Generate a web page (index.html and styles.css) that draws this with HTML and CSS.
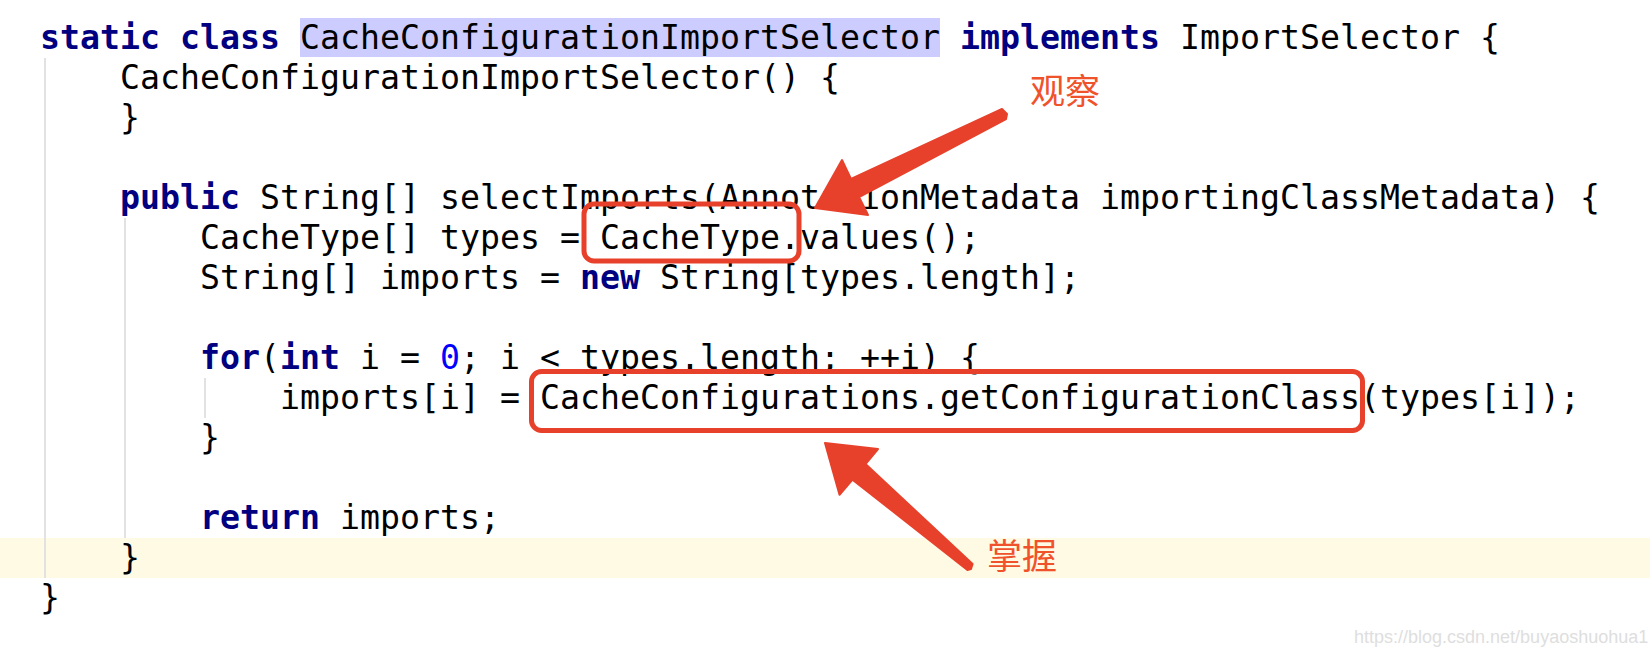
FILE: index.html
```html
<!DOCTYPE html>
<html lang="zh">
<head>
<meta charset="utf-8">
<title>CacheConfigurationImportSelector</title>
<link rel="stylesheet" href="styles.css">
</head>
<body>
<div class="editor">
  <div class="code">
    <div class="line"><span class="kw">static</span> <span class="kw">class</span> <span class="sel">CacheConfigurationImportSelector</span> <span class="kw">implements</span> ImportSelector {</div>
    <div class="line">    CacheConfigurationImportSelector() {</div>
    <div class="line">    }</div>
    <div class="line"> </div>
    <div class="line">    <span class="kw">public</span> String[] selectImports(AnnotationMetadata importingClassMetadata) {</div>
    <div class="line">        CacheType[] types = CacheType.values();</div>
    <div class="line">        String[] imports = <span class="kw">new</span> String[types.length];</div>
    <div class="line"> </div>
    <div class="line">        <span class="kw">for</span>(<span class="kw">int</span> i = <span class="num">0</span>; i &lt; types.length; ++i) {</div>
    <div class="line">            imports[i] = CacheConfigurations.getConfigurationClass(types[i]);</div>
    <div class="line">        }</div>
    <div class="line"> </div>
    <div class="line">        <span class="kw">return</span> imports;</div>
    <div class="line caret">    }</div>
    <div class="line">}</div>
  </div>

  <div class="guide guide-outer"></div>
  <div class="guide guide-method"></div>
  <div class="guide guide-loop"></div>

  <svg class="marks" width="1650" height="656" viewBox="0 0 1650 656">
    <g fill="none" stroke="#e8412b" stroke-width="5">
      <rect x="584" y="204" width="215" height="57" rx="10"/>
      <rect x="531.5" y="371.5" width="831" height="59" rx="10"/>
    </g>
    <g fill="#e8412b" stroke="#e8412b" stroke-width="2" stroke-linejoin="round">
      <polygon points="815,208 842,160 851,179 1002,109 1007,114 1006,119 859,197 868,215"/>
      <polygon points="825,443 878,449 865.5,464 972.6,564 971,569 967.4,570 852.5,479.6 839.5,494.8"/>
    </g>
  </svg>

  <div class="note note-observe">观察</div>
  <div class="note note-master">掌握</div>
  <div class="watermark">https://blog.csdn.net/buyaoshuohua1</div>
</div>
</body>
</html>
```
FILE: styles.css
```css
html, body {
  margin: 0;
  padding: 0;
  background: #ffffff;
}

.editor {
  position: relative;
  width: 1650px;
  height: 656px;
  overflow: hidden;
  background: #ffffff;
}

.code {
  padding-top: 18px;
  font-family: "DejaVu Sans Mono", "Liberation Mono", monospace;
  font-size: 33.22px;
  color: #000000;
}

.line {
  height: 40px;
  line-height: 40px;
  padding-left: 40px;
  white-space: pre;
}

.caret {
  background: #fffae3;
}

.kw {
  color: #000080;
  font-weight: bold;
}

.num {
  color: #0000ff;
}

.sel {
  background: #ccccff;
}

.guide {
  position: absolute;
  width: 2px;
  background: #e2e2e2;
}

.guide-outer {
  left: 44px;
  top: 58px;
  height: 520px;
}

.guide-method {
  left: 124px;
  top: 218px;
  height: 320px;
}

.guide-loop {
  left: 204px;
  top: 378px;
  height: 40px;
}

.marks {
  position: absolute;
  left: 0;
  top: 0;
}

.note {
  position: absolute;
  font-family: "Noto Sans CJK SC", sans-serif;
  font-size: 35px;
  line-height: 35px;
  color: #f0522c;
}

.note-observe {
  left: 1030px;
  top: 71px;
}

.note-master {
  left: 987px;
  top: 536px;
}

.watermark {
  position: absolute;
  left: 1354px;
  top: 627px;
  font-family: "Liberation Sans", Arial, sans-serif;
  font-size: 18px;
  line-height: 20px;
  color: #dedede;
}
```
